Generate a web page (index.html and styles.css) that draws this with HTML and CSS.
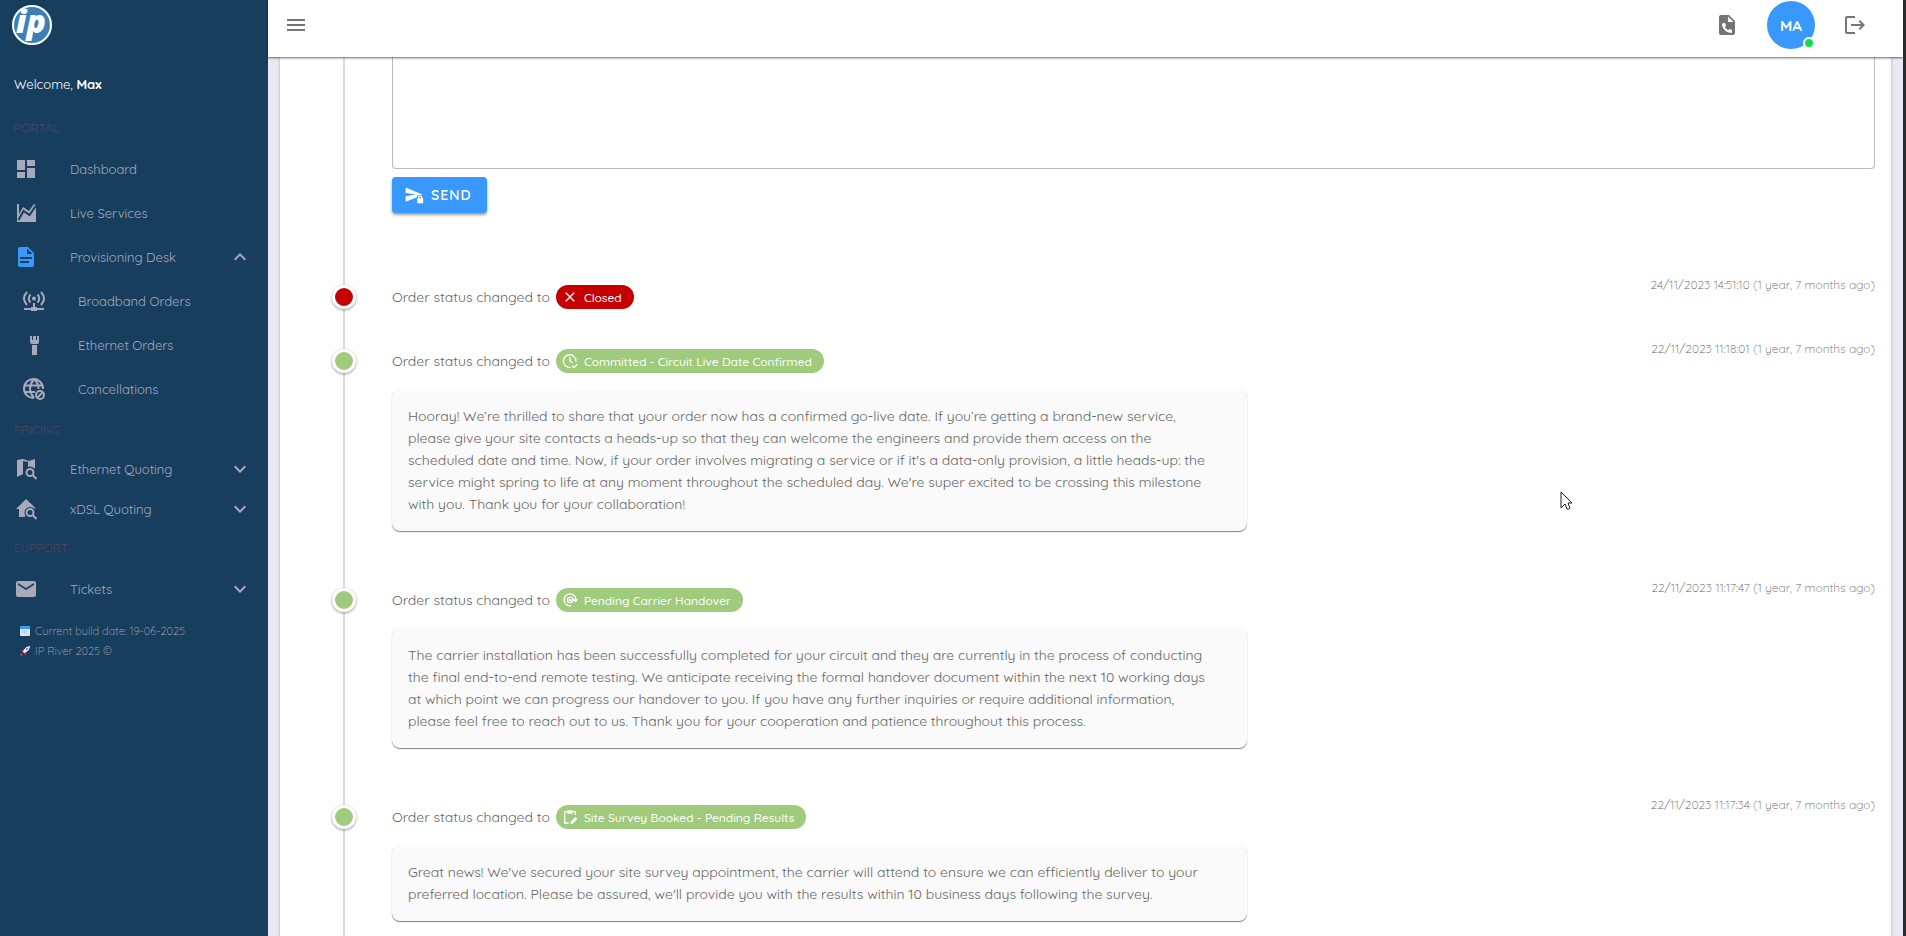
FILE: index.html
```
<!DOCTYPE html>
<html lang="en">
<head>
    <meta charset="UTF-8">
    <meta name="viewport" content="width=device-width, initial-scale=1.0">
    <title>Order timeline</title>
    <link rel="stylesheet" href="styles.css">
</head>
<body>
    <div class="app">
        <aside class="sidebar">
            <a href="#" class="logo" aria-label="Home">
                <svg viewBox="0 0 40 40" width="40" height="40">
                    <circle cx="20" cy="20" r="19" fill="#3a80b8" stroke="#fff" stroke-width="2"/>
                    <text x="19" y="28" text-anchor="middle" class="logo-text">ip</text>
                </svg>
            </a>
            <p class="welcome">Welcome, <b>Max</b></p>

            <nav>
                <h2>PORTAL</h2>
                <a href="#" class="nav-item">
                    <svg class="icon" viewBox="0 0 24 24"><path d="M13 3V9H21V3M13 21H21V11H13M3 21H11V15H3M3 13H11V3H3Z"/></svg>
                    <span>Dashboard</span>
                </a>
                <a href="#" class="nav-item">
                    <svg class="icon" viewBox="0 0 24 24"><path d="M3 3H5V13L9 6L15 10L20 3L22 4V21H3Z"/><path d="M4.500 19L9.500 10L15.500 14L22 4.500" fill="none" stroke="#173e5d" stroke-width="2"/></svg>
                    <span>Live Services</span>
                </a>
                <a href="#" class="nav-item active">
                    <svg class="icon" viewBox="0 0 24 24"><path d="M13 9H18.500L13 3.500V9M6 2H14L20 8V20A2 2 0 0 1 18 22H6C4.890 22 4 21.100 4 20V4C4 2.890 4.890 2 6 2M15 18V16H6V18H15M18 14V12H6V14H18Z"/></svg>
                    <span>Provisioning Desk</span>
                    <svg class="chevron" viewBox="0 0 24 24"><path d="M7.410 15.410L12 10.830L16.590 15.410L18 14L12 8L6 14Z"/></svg>
                </a>
                <a href="#" class="nav-item sub">
                    <svg class="icon" viewBox="0 0 24 24"><g fill="none" stroke="currentColor" stroke-width="2"><path d="M5 3Q-1 9.500 5 16M8.500 5.500Q5 9.500 8.500 13.500M15.500 5.500Q19 9.500 15.500 13.500M19 3Q25 9.500 19 16M12 14V19M2 20H22"/></g><circle cx="12" cy="9.500" r="2"/><path d="M9 18H15V22H9Z"/></svg>
                    <span>Broadband Orders</span>
                </a>
                <a href="#" class="nav-item sub">
                    <svg class="icon" viewBox="0 0 24 24"><path d="M8 3H10V7H11V3H14V7H15V3H17V9L16 11H9L8 9ZM10 12H15V22H10Z"/></svg>
                    <span>Ethernet Orders</span>
                </a>
                <a href="#" class="nav-item sub">
                    <svg class="icon" viewBox="0 0 24 24"><g fill="none" stroke="currentColor" stroke-width="2"><path d="M12 21A9.500 9.500 0 1 1 21 12M3 8.500H21M3 15H13M12 2Q4 11.500 12 21M12 2Q17 7 16.500 12"/><circle cx="18" cy="18" r="4"/><path d="M15.500 20.500L20.500 15.500"/></g></svg>
                    <span>Cancellations</span>
                </a>

                <h2>PRICING</h2>
                <a href="#" class="nav-item short">
                    <svg class="icon" viewBox="0 0 24 24"><path d="M3 3L9 2L15 4L21 2V20L15 18L9 17L3 20Z"/><path d="M9 4V17H14L15 5Z" fill="#173e5d"/><path d="M14 4H16V12H14Z"/><circle cx="16" cy="15.500" r="6" fill="#173e5d"/><path d="M15 17L22 17V24H15Z" fill="#173e5d"/><g fill="none" stroke="currentColor" stroke-width="2"><circle cx="16" cy="15.500" r="3.500"/><path d="M18.500 18L22.500 22"/></g></svg>
                    <span>Ethernet Quoting</span>
                    <svg class="chevron" viewBox="0 0 24 24"><path d="M7.410 8.580L12 13.170L16.590 8.580L18 10L12 16L6 10Z"/></svg>
                </a>
                <a href="#" class="nav-item short">
                    <svg class="icon" viewBox="0 0 24 24"><path d="M12 2L22 11.500H19V20H5V12H2Z"/><circle cx="16" cy="15.500" r="5.500" fill="#173e5d"/><path d="M11 17H22V24H11Z" fill="#173e5d"/><g fill="none" stroke="currentColor" stroke-width="2"><circle cx="16" cy="15.500" r="3.500"/><path d="M18.500 18L22.500 22"/></g></svg>
                    <span>xDSL Quoting</span>
                    <svg class="chevron" viewBox="0 0 24 24"><path d="M7.410 8.580L12 13.170L16.590 8.580L18 10L12 16L6 10Z"/></svg>
                </a>

                <h2>SUPPORT</h2>
                <a href="#" class="nav-item">
                    <svg class="icon" viewBox="0 0 24 24"><path d="M20 8L12 13L4 8V6L12 11L20 6M20 4H4C2.890 4 2 4.890 2 6V18A2 2 0 0 0 4 20H20A2 2 0 0 0 22 18V6C22 4.890 21.100 4 20 4Z"/></svg>
                    <span>Tickets</span>
                    <svg class="chevron" viewBox="0 0 24 24"><path d="M7.410 8.580L12 13.170L16.590 8.580L18 10L12 16L6 10Z"/></svg>
                </a>
            </nav>

            <footer class="build">
                <p>
                    <svg viewBox="0 0 10 10" width="10" height="10"><rect width="10" height="10" rx="1" fill="#dbe6fa"/><rect width="10" height="3" fill="#3c9bf0"/><path d="M2 5H8M2 7H8" stroke="#96a5c8" stroke-dasharray="1 1"/></svg>
                    Current build date: 19-06-2025
                </p>
                <p>
                    <svg viewBox="0 0 10 10" width="10" height="10"><path d="M1 5L4 3L7 6L5 9L4 7L3 6ZM0 10L1 7L3 9Z" fill="#e8305c"/><path d="M3 6Q5 0 10 0Q10 5 4 7Z" fill="#e6e6f2"/><circle cx="7" cy="3" r="1" fill="#4a83b5"/></svg>
                    IP River 2025 ©
                </p>
            </footer>
        </aside>

        <div class="page">
            <header class="topbar">
                <button class="icon-btn" aria-label="Menu">
                    <svg class="icon" viewBox="0 0 24 24"><path d="M3 6H21V8H3V6M3 11H21V13H3V11M3 16H21V18H3V16Z"/></svg>
                </button>
                <div class="actions">
                    <button class="icon-btn" aria-label="Call log">
                        <svg class="icon" viewBox="0 0 24 24"><path d="M14 2L20 8V20A2 2 0 0 1 18 22H6A2 2 0 0 1 4 20V4A2 2 0 0 1 6 2ZM13 3.500V9H18.500ZM7 10.500C7 16 11.500 20 17 20V17L14.500 16L13 17.200Q10.800 16 9.800 14L11 12.500L10 10Z" fill-rule="evenodd"/></svg>
                    </button>
                    <button class="avatar">MA<span class="online"></span></button>
                    <button class="icon-btn" aria-label="Log out">
                        <svg class="icon" viewBox="0 0 24 24"><path d="M17 7L15.590 8.410L18.170 11H8V13H18.170L15.590 15.580L17 17L22 12M4 5H12V3H4C2.900 3 2 3.900 2 5V19C2 20.100 2.900 21 4 21H12V19H4V5Z"/></svg>
                    </button>
                </div>
            </header>

            <main class="content">
                <section class="timeline">
                    <form class="reply">
                        <textarea aria-label="Message"></textarea>
                        <button type="button" class="send">
                            <svg viewBox="0 0 24 24" width="20" height="20"><path d="M2 3L22 11.500L20 12.500A4 4 0 0 0 15 15L2 20V13.500L14 11.500L2 9.500Z"/><path d="M16 16H23V22H16Z"/><path d="M17.500 17V15.500A2 2 0 0 1 21.500 15.500V17" fill="none" stroke="currentColor" stroke-width="1.500"/></svg>
                            SEND
                        </button>
                    </form>

                    <article class="item closed">
                        <span class="dot"></span>
                        <div class="body">
                            <p class="status">Order status changed to
                                <span class="chip">
                                    <svg viewBox="0 0 24 24"><path d="M19 6.410L17.590 5L12 10.590L6.410 5L5 6.410L10.590 12L5 17.590L6.410 19L12 13.410L17.590 19L19 17.590L13.410 12Z"/></svg>
                                    Closed
                                </span>
                            </p>
                        </div>
                        <time>24/11/2023 14:51:10 (1 year, 7 months ago)</time>
                    </article>

                    <article class="item">
                        <span class="dot"></span>
                        <div class="body">
                            <p class="status">Order status changed to
                                <span class="chip">
                                    <svg viewBox="0 0 24 24"><path d="M13 21.500A9.500 9.500 0 1 1 21 13M12 6V12L16 15M15 19L18 22L23 17" fill="none" stroke="currentColor" stroke-width="2"/></svg>
                                    Committed - Circuit Live Date Confirmed
                                </span>
                            </p>
                            <p class="note">Hooray! We’re thrilled to share that your order now has a confirmed go-live date. If you’re getting a brand-new service,<br>please give your site contacts a heads-up so that they can welcome the engineers and provide them access on the<br>scheduled date and time. Now, if your order involves migrating a service or if it's a data-only provision, a little heads-up: the<br>service might spring to life at any moment throughout the scheduled day. We're super excited to be crossing this milestone<br>with you. Thank you for your collaboration!</p>
                        </div>
                        <time>22/11/2023 11:18:01 (1 year, 7 months ago)</time>
                    </article>

                    <article class="item">
                        <span class="dot"></span>
                        <div class="body">
                            <p class="status">Order status changed to
                                <span class="chip">
                                    <svg viewBox="0 0 24 24"><g fill="none" stroke="currentColor" stroke-width="2"><path d="M14 20.500A9 9 0 1 1 21 12H16V9M16 12A4 4 0 1 1 12 8H16"/></g><circle cx="12" cy="12" r="2"/><path d="M17 11H24L20.500 16Z"/></svg>
                                    Pending Carrier Handover
                                </span>
                            </p>
                            <p class="note">The carrier installation has been successfully completed for your circuit and they are currently in the process of conducting<br>the final end-to-end remote testing. We anticipate receiving the formal handover document within the next 10 working days<br>at which point we can progress our handover to you. If you have any further inquiries or require additional information,<br>please feel free to reach out to us. Thank you for your cooperation and patience throughout this process.</p>
                        </div>
                        <time>22/11/2023 11:17:47 (1 year, 7 months ago)</time>
                    </article>

                    <article class="item">
                        <span class="dot"></span>
                        <div class="body">
                            <p class="status">Order status changed to
                                <span class="chip">
                                    <svg viewBox="0 0 24 24"><path d="M10 21H4V4H20V9" fill="none" stroke="currentColor" stroke-width="2"/><path d="M8 2H16V7H8ZM13 19L20 12L23 15L16 22H13Z"/></svg>
                                    Site Survey Booked - Pending Results
                                </span>
                            </p>
                            <p class="note">Great news! We've secured your site survey appointment, the carrier will attend to ensure we can efficiently deliver to your<br>preferred location. Please be assured, we'll provide you with the results within 10 business days following the survey.</p>
                        </div>
                        <time>22/11/2023 11:17:34 (1 year, 7 months ago)</time>
                    </article>
                </section>
            </main>
        </div>
    </div>

    <svg class="cursor" viewBox="0 0 13 20" width="13" height="20"><path d="M1 1V17L5 13L7 18Q9 19 10 17L8 12H12Z" fill="#fff" stroke="#1a1a2a"/></svg>
</body>
</html>
```

FILE: styles.css
```
* {
    box-sizing: border-box;
}
body {
    margin: 0;
    background: #2b2b2b;
    font-family: Quicksand, Lato, "Open Sans", sans-serif;
    font-size: 14px;
    color: #666;
}
p, h2 {
    margin: 0;
}
a {
    color: inherit;
    text-decoration: none;
}
button {
    border: 0;
    padding: 0;
    background: none;
    font-family: inherit;
    color: inherit;
    cursor: pointer;
}
svg {
    fill: currentColor;
    flex: none;
}
.icon {
    display: block;
    width: 24px;
    height: 24px;
}
.app {
    display: flex;
    height: 100vh;
    margin-right: 3px;
    overflow: hidden;
    background: #e9e9f5;
}

/* sidebar */
.sidebar {
    flex: none;
    width: 268px;
    background: #173e5d;
    color: #a9a9bc;
    font-size: 13px;
}
.logo {
    display: block;
    height: 74px;
    padding: 5px 12px;
}
.logo svg {
    overflow: visible;
}
.logo-text {
    font-family: "Open Sans", Lato, sans-serif;
    font-size: 32px;
    font-weight: 800;
    font-style: italic;
    fill: #fff;
}
.welcome {
    padding-left: 14px;
    height: 35px;
    line-height: 20px;
    color: #fff;
}
.sidebar h2 {
    padding-left: 14px;
    font-size: 12px;
    font-weight: 400;
    line-height: 38px;
    color: #4b4763;
}
.nav-item {
    display: flex;
    align-items: center;
    height: 44px;
    padding: 0 16px 0 14px;
}
.nav-item.short {
    height: 40px;
}
.nav-item.sub {
    padding-left: 22px;
}
.nav-item span {
    flex: 1;
    margin-left: 32px;
}
.nav-item.active .icon {
    color: #3898fc;
}
.chevron {
    width: 24px;
    height: 24px;
}
.build {
    padding: 10px 20px;
    font-size: 11px;
    font-weight: 300;
    line-height: 20px;
}
.build p {
    display: flex;
    align-items: center;
    gap: 5px;
}

/* top bar */
.page {
    flex: 1;
    min-width: 0;
    display: flex;
    flex-direction: column;
}
.topbar {
    position: relative;
    z-index: 1;
    flex: none;
    display: flex;
    justify-content: space-between;
    height: 57px;
    padding: 1px 36px 8px 16px;
    background: #fff;
    box-shadow: 0 1px 2px rgba(0, 0, 0, .6);
}
.icon-btn {
    color: #757575;
}
.actions {
    display: flex;
    align-items: center;
    gap: 28px;
}
.avatar {
    position: relative;
    width: 48px;
    height: 48px;
    border-radius: 50%;
    background: #3898fc;
    color: #fff;
    font-size: 15px;
    font-weight: 700;
}
.online {
    position: absolute;
    right: 0;
    bottom: 0;
    width: 12px;
    height: 12px;
    border: 2px solid #fff;
    border-radius: 50%;
    background: #0be04f;
}

/* timeline */
.content {
    flex: 1;
    min-height: 0;
    padding: 0 12px;
}
.timeline {
    min-height: 100%;
    padding: 0 16px 0 52px;
    background: linear-gradient(#ddd, #ddd) 63px 0 / 2px 100% no-repeat #fff;
    box-shadow: 0 0 3px rgba(0, 0, 0, .25);
}
.reply {
    padding: 0 0 60px 60px;
}
.reply textarea {
    display: block;
    width: 100%;
    height: 112px;
    margin-bottom: 8px;
    border: 1px solid #bbb;
    border-top: 0;
    border-radius: 0 0 4px 4px;
    resize: none;
    font: inherit;
}
.send {
    display: flex;
    align-items: center;
    gap: 7px;
    height: 36px;
    padding: 0 16px 0 12px;
    border-radius: 4px;
    background: #3898fc;
    box-shadow: 0 2px 3px rgba(0, 0, 0, .4);
    color: #fff;
    font-size: 14px;
    font-weight: 600;
    letter-spacing: 1px;
}
.item {
    display: grid;
    grid-template-columns: 24px 1fr auto;
    column-gap: 36px;
    padding-bottom: 28px;
}
.dot {
    width: 24px;
    height: 24px;
    margin-top: 12px;
    border: 3px solid #fff;
    border-radius: 50%;
    background: #a0ca7c;
    box-shadow: 0 1px 3px rgba(0, 0, 0, .4);
}
.closed .dot {
    background: #c40000;
}
.body {
    padding-top: 12px;
}
.status {
    display: flex;
    align-items: center;
    gap: 6px;
    height: 24px;
}
.chip {
    display: flex;
    align-items: center;
    gap: 6px;
    height: 24px;
    padding: 0 12px 0 6px;
    border-radius: 12px;
    background: #a0ca7c;
    color: #fff;
    font-size: 12px;
    font-weight: 500;
}
.chip svg {
    width: 16px;
    height: 16px;
}
.closed .chip {
    background: #c40000;
}
.note {
    max-width: 855px;
    margin: 16px 0 17px;
    padding: 16px;
    border-radius: 8px;
    background: #fafafa;
    box-shadow: 0 1px 1px rgba(0, 0, 0, .5);
    line-height: 22px;
}
.item time {
    font-size: 12px;
    font-weight: 300;
    line-height: 24px;
}

.cursor {
    position: absolute;
    left: 1560px;
    top: 491px;
}
```
